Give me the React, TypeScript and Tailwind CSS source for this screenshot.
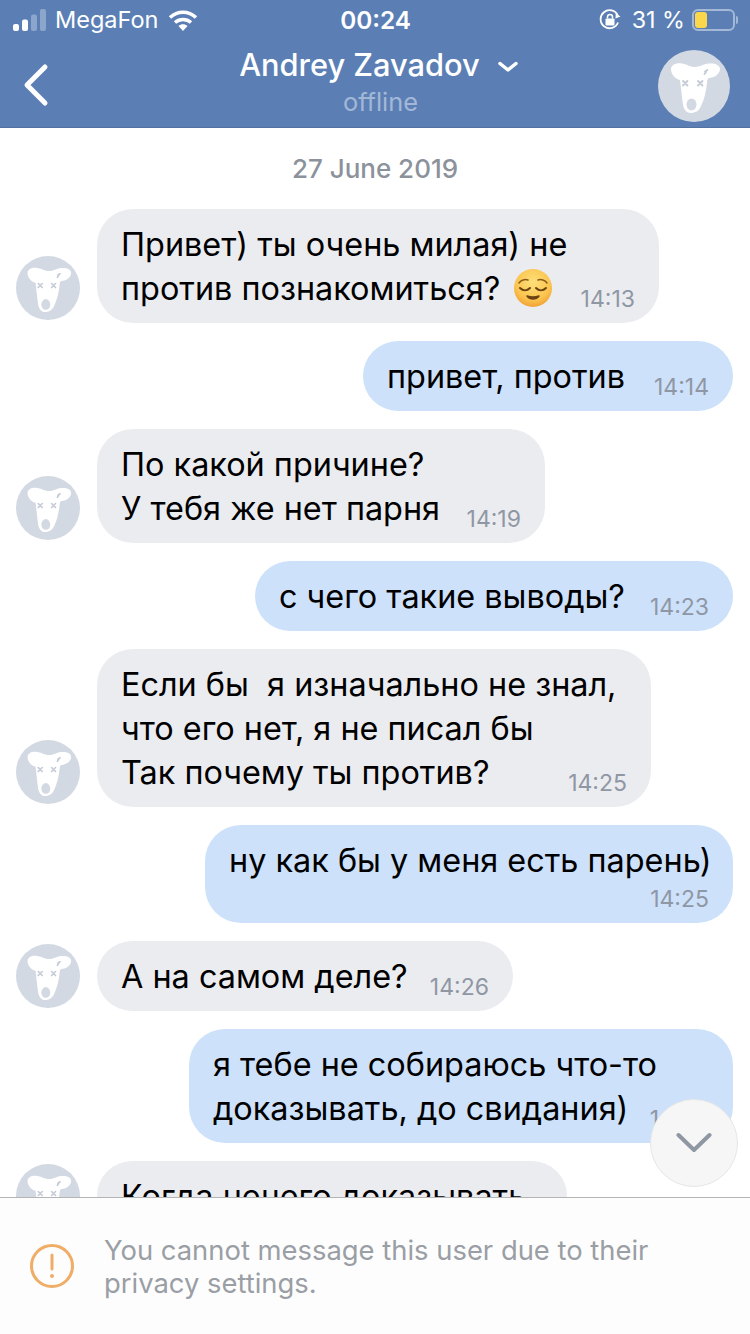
const font = "font-['Inter','Noto_Sans',sans-serif]";

const DogAvatar = ({ size }: { size: number }) => (
  <svg width={size} height={size} viewBox="0 0 72 72" className="shrink-0 block">
    <circle cx="36" cy="36" r="36" fill="#d3d9e3" />
    <path
      d="M13 19C13 15 18 12.500 24 13.500C30 14.500 32 17 37 17C42 17 45 14 51 13.500C57 13 62 15 62 19C62 24 56 28 51 28C50 28 49 30 49 33C48 42 46 50 43 56C41 61 37 63 33 63C29 63 26 60 25 55C24 48 23 38 22 30C17 29 13 24 13 19Z"
      fill="#fff"
    />
    <ellipse cx="33.500" cy="54.500" rx="5" ry="6" fill="#d3d9e3" />
    <path
      d="M25 31l4.500 4.500M29.500 31L25 35.500M40 31l4.500 4.500M44.500 31L40 35.500M47 21.500l2.500-1.500M46.500 24l1.500-2"
      stroke="#c3cad6"
      strokeWidth="1.800"
      strokeLinecap="round"
      fill="none"
    />
  </svg>
);

const Emoji = () => (
  <svg width="40" height="40" viewBox="0 0 40 40" className="inline-block align-[-8px] ml-[13px]">
    <defs>
      <radialGradient id="face" cx="50%" cy="35%" r="70%">
        <stop offset="0%" stopColor="#fde07a" />
        <stop offset="65%" stopColor="#fbc44e" />
        <stop offset="100%" stopColor="#ee9a2d" />
      </radialGradient>
    </defs>
    <circle cx="20" cy="20" r="19" fill="url(#face)" />
    <path d="M6 15c2-3 6-4 9-3M25 12c3-1 7 0 9 3" stroke="#8a5a1c" strokeWidth="1.500" strokeLinecap="round" fill="none" />
    <path d="M7 20c3 3 7 3 10 0M23 20c3 3 7 3 10 0" stroke="#6b4312" strokeWidth="2" strokeLinecap="round" fill="none" />
    <path d="M14 28c3 4 9 4 12 0c-4 1.500-8 1.500-12 0Z" fill="#6b4312" stroke="#6b4312" strokeWidth="1.500" strokeLinejoin="round" />
  </svg>
);

const Time = ({ children }: { children: string }) => (
  <div className="text-[23px] leading-[26px] text-[#8f97a4] shrink-0">{children}</div>
);

type BubbleProps = { lines: string[]; time: string; className?: string };

const Incoming = ({ lines, time, emoji, className = "" }: BubbleProps & { emoji?: boolean }) => (
  <div className="flex items-end pl-4">
    <div className="mb-[3px]">
      <DogAvatar size={64} />
    </div>
    <div className={`ml-[17px] bg-[#ebecf0] rounded-[36px] px-6 pt-[14px] pb-[12px] ${className}`}>
      {lines.slice(0, -1).map((line) => (
        <div key={line} className="whitespace-pre">{line}</div>
      ))}
      <div className="flex items-end justify-between gap-[20px]">
        <span className="whitespace-pre">
          {lines[lines.length - 1]}
          {emoji && <Emoji />}
        </span>
        <div className="mb-[-1px]">
          <Time>{time}</Time>
        </div>
      </div>
    </div>
  </div>
);

const Outgoing = ({ lines, time, below, className = "" }: BubbleProps & { below?: boolean }) => (
  <div className="flex justify-end pr-[17px]">
    <div className={`bg-[#cde1fb] rounded-[36px] px-6 pt-[14px] pb-[12px] ${className}`}>
      {lines.slice(0, -1).map((line) => (
        <div key={line} className="whitespace-pre">{line}</div>
      ))}
      {below ? (
        <>
          <div className="whitespace-pre">{lines[lines.length - 1]}</div>
          <div className="flex justify-end mt-[3px] -mb-[1px]">
            <Time>{time}</Time>
          </div>
        </>
      ) : (
        <div className="flex items-end justify-between gap-[20px]">
          <span className="whitespace-pre">{lines[lines.length - 1]}</span>
          <div className="mb-[-1px]">
            <Time>{time}</Time>
          </div>
        </div>
      )}
    </div>
  </div>
);

const StatusBar = () => (
  <div className="h-[40px] flex items-center justify-between text-white text-[23.5px] leading-none pl-[13px] pr-[12px]">
    <div className="flex items-center w-[300px]">
      <svg width="34" height="22" viewBox="0 0 34 22" className="block">
        <rect x="0" y="15" width="6" height="7" rx="2" fill="#fff" />
        <rect x="9" y="10.500" width="6" height="11.500" rx="2" fill="#fff" />
        <rect x="18" y="5.500" width="6" height="16.500" rx="2" fill="#8ba5cb" />
        <rect x="27" y="0" width="6" height="22" rx="2" fill="#8ba5cb" />
      </svg>
      <span className="ml-2">MegaFon</span>
      <svg width="30" height="22" viewBox="0 0 30 22" className="ml-[10px] block">
        <path d="M2 8.500C9.500 1.500 20.500 1.500 28 8.500" stroke="#fff" strokeWidth="3.400" fill="none" />
        <path d="M7 13.500C11.500 9.500 18.500 9.500 23 13.500" stroke="#fff" strokeWidth="3.400" fill="none" />
        <path d="M10.500 17C13 14.500 17 14.500 19.500 17L15 22Z" fill="#fff" />
      </svg>
    </div>
    <span className="font-semibold text-[24.3px]">00:24</span>
    <div className="flex items-center justify-end w-[300px]">
      <svg width="22" height="22" viewBox="0 0 22 22" className="block">
        <path d="M19 13.500A9 9 0 1 1 18.800 6.500" stroke="#fff" strokeWidth="1.800" fill="none" />
        <path d="M21.500 7.500L16.500 9.500L16.800 4.500Z" fill="#fff" />
        <rect x="6.500" y="9.500" width="9" height="7" rx="1" fill="#fff" />
        <path d="M8.500 9.500V8a2.500 2.500 0 0 1 5 0v1.500" stroke="#fff" strokeWidth="1.500" fill="none" />
      </svg>
      <span className="ml-[11px] text-[23.3px]">31 %</span>
      <div className="ml-[7px] flex items-center">
        <div className="w-[43px] h-[22px] rounded-[6px] border-2 border-[#a3b8d6] p-[1px]">
          <div className="w-[12px] h-full rounded-[3px] bg-[#fbd84b]" />
        </div>
        <div className="w-[2px] h-[8px] ml-[1px] rounded-r-sm bg-[#a3b8d6]" />
      </div>
    </div>
  </div>
);

const Header = () => (
  <div className="bg-[#5b7fb5] h-[128px] shrink-0 border-b border-[#54729f]">
    <StatusBar />
    <div className="grid grid-cols-[1fr_auto_1fr] pl-[23px] pr-5">
      <svg width="26" height="44" viewBox="0 0 26 44" className="mt-[23px] block">
        <path d="M22 4L4 22L22 40" stroke="#fff" strokeWidth="5" strokeLinecap="round" strokeLinejoin="round" fill="none" />
      </svg>
      <div className="flex flex-col items-center ml-[4px]">
        <div className="flex items-center text-white text-[30.8px] leading-[38px] font-medium mt-[6px]">
          Andrey Zavadov
          <svg width="20" height="12" viewBox="0 0 20 12" className="ml-[18px] mt-[3px] block">
            <path d="M2 2.500L10 9L18 2.500" stroke="#fff" strokeWidth="3.500" strokeLinecap="round" strokeLinejoin="round" fill="none" />
          </svg>
        </div>
        <div className="text-[#a3b8d6] text-[25.4px] leading-[32px] ml-[4px] mt-[2px]">offline</div>
      </div>
      <div className="mt-[10px] justify-self-end">
        <DogAvatar size={72} />
      </div>
    </div>
  </div>
);

export default function App() {
  return (
    <div className={`${font} relative w-[750px] h-[1334px] overflow-hidden bg-white flex flex-col text-black`}>
      <Header />

      <div className="flex-1 overflow-hidden text-[32.4px] leading-[44px]">
        <div className="h-[81px] flex items-center justify-center text-[#8c929b] text-[26px] font-medium">
          27 June 2019
        </div>
        <div className="flex flex-col gap-[18px]">
          <Incoming lines={["Привет) ты очень милая) не", "против познакомиться?"]} time="14:13" emoji className="w-[562px]" />
          <Outgoing lines={["привет, против"]} time="14:14" className="w-[370px]" />
          <Incoming lines={["По какой причине?", "У тебя же нет парня"]} time="14:19" className="w-[448px]" />
          <Outgoing lines={["с чего такие выводы?"]} time="14:23" className="w-[478px]" />
          <Incoming lines={["Если бы  я изначально не знал,", "что его нет, я не писал бы", "Так почему ты против?"]} time="14:25" className="w-[554px]" />
          <Outgoing lines={["ну как бы у меня есть парень)"]} time="14:25" below className="w-[528px]" />
          <Incoming lines={["А на самом деле?"]} time="14:26" className="w-[416px]" />
          <Outgoing lines={["я тебе не собираюсь что-то", "доказывать, до свидания)"]} time="14:29" className="w-[544px]" />
          <div className="flex items-end pl-4">
            <div className="mb-[3px]">
              <DogAvatar size={64} />
            </div>
            <div className="ml-[17px] w-[470px] bg-[#ebecf0] rounded-[36px] px-6 pt-[14px] pb-[12px] whitespace-pre">
              Когда нечего доказывать
            </div>
          </div>
        </div>
      </div>

      <div className="absolute left-[650px] top-[1099px] w-[88px] h-[88px] rounded-full bg-[#f6f6f6] border border-[#e6e6e6] flex items-center justify-center">
        <svg width="36" height="22" viewBox="0 0 36 22" className="block">
          <path d="M2.500 3L18 18L33.500 3" stroke="#8e97a3" strokeWidth="4" strokeLinecap="round" strokeLinejoin="round" fill="none" />
        </svg>
      </div>

      <div className="h-[137px] shrink-0 bg-[#fdfdfd] border-t border-[#b4b4b4] flex items-start pl-[30px] pt-[36px]">
        <svg width="44" height="44" viewBox="0 0 44 44" className="mt-[10px] shrink-0 block">
          <circle cx="22" cy="22" r="20.500" stroke="#f0ad68" strokeWidth="3" fill="none" />
          <path d="M22 11V25" stroke="#f0ad68" strokeWidth="3" strokeLinecap="round" />
          <circle cx="22" cy="32" r="2" fill="#f0ad68" />
        </svg>
        <div className="ml-[30px] text-[27.4px] leading-[33px] text-[#9a9ea5]">
          You cannot message this user due to their
          <br />
          privacy settings.
        </div>
      </div>
    </div>
  );
}
